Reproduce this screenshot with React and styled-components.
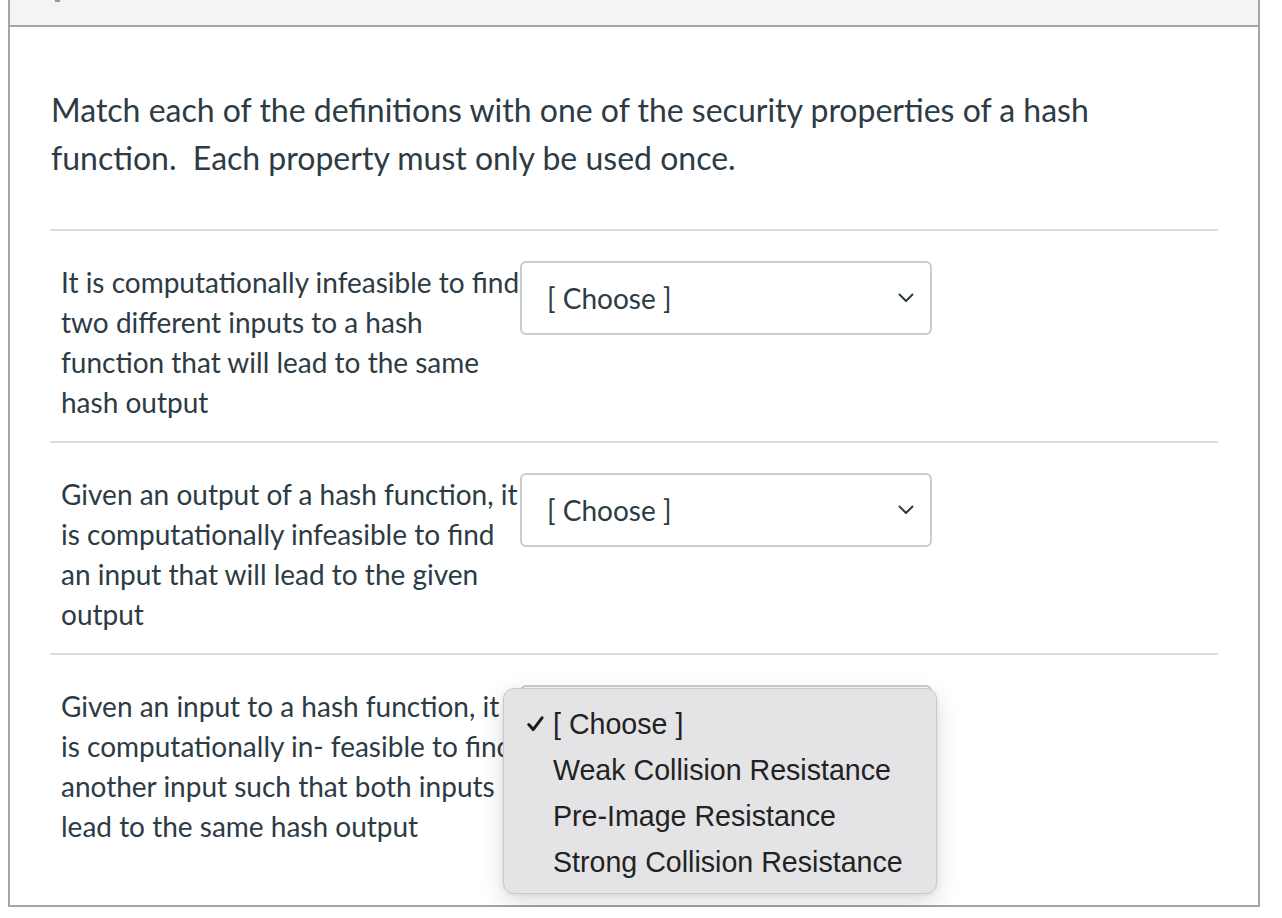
import React from "react";
import styled, { createGlobalStyle } from "styled-components";

const Global = createGlobalStyle`
  html, body { margin: 0; padding: 0; background: #ffffff; }
  body { font-family: Lato, "Open Sans", sans-serif; color: #2d3b45; }
  * { box-sizing: border-box; }
`;

const Card = styled.div`
  margin-left: 8px;
  width: 1252px;
  border: 2px solid #a5a5a5;
  border-top: none;
  background: #fff;
`;

const Header = styled.div`
  height: 27px;
  background: #f4f4f4;
  border-bottom: 2px solid #a5a5a5;
  position: relative;
  overflow: hidden;
`;

const HeaderMark = styled.span`
  position: absolute;
  left: 45px;
  top: 0;
  width: 5px;
  height: 2px;
  background: #9a9a9a;
`;

const Body = styled.div`
  padding: 59px 40px 40px 40px;
`;

const Question = styled.p`
  margin: 0 0 47px 1px;
  font-size: 32px;
  line-height: 48px;
  color: #2d3b45;
`;

const Row = styled.div`
  display: flex;
  align-items: flex-start;
  border-top: 2px solid #dddddd;
  padding: 31px 0 19px 11px;
`;

const Label = styled.div`
  width: 459px;
  flex: none;
  font-size: 28px;
  line-height: 40px;
  color: #2d3b45;
`;

const SelectWrap = styled.div`
  position: relative;
  margin-top: -1px;
`;

const Select = styled.div`
  width: 412px;
  height: 74px;
  border: 2px solid #c7cdd1;
  border-radius: 6px;
  background: #fff;
  display: flex;
  align-items: center;
  justify-content: space-between;
  padding: 0 16px 0 25px;
  font-size: 28px;
  color: #2d3b45;
  & > * {
    visibility: ${(p) => (p.$covered ? "hidden" : "visible")};
  }
`;

const Chevron = () => (
  <svg width="16" height="10" viewBox="0 0 16 10" fill="none">
    <path d="M1.5 1.5 L8 8 L14.5 1.5" stroke="#2d3b45" strokeWidth="2" strokeLinecap="round" strokeLinejoin="round" />
  </svg>
);

const Menu = styled.div`
  position: absolute;
  left: -17px;
  top: 3px;
  width: 434px;
  height: 206px;
  background: #e4e4e6;
  border: 1px solid #c9c9cb;
  border-radius: 11px;
  box-shadow: 0 8px 24px rgba(0, 0, 0, 0.14), 0 1px 4px rgba(0, 0, 0, 0.08);
  padding-top: 12px;
  font-family: "Liberation Sans", Arial, sans-serif;
  font-size: 28.6px;
  color: #222;
  z-index: 2;
`;

const MenuItem = styled.div`
  display: flex;
  align-items: center;
  height: 46px;
  padding-left: 23px;
`;

const CheckSlot = styled.span`
  width: 26px;
  flex: none;
  display: flex;
  align-items: center;
`;

const CheckIcon = () => (
  <svg width="17" height="16" viewBox="0 0 17 16" fill="none">
    <path d="M1.8 8.6 L6.2 13.6 L15 1.8" stroke="#1a1a1a" strokeWidth="3" strokeLinecap="round" strokeLinejoin="round" />
  </svg>
);

const rows = [
  {
    text: "It is computationally infeasible to find two different inputs to a hash function that will lead to the same hash output",
  },
  {
    text: "Given an output of a hash function, it is computationally infeasible to find an input that will lead to the given output",
  },
  {
    text: "Given an input to a hash function, it is computationally in- feasible to find another input such that both inputs lead to the same hash output",
    open: true,
  },
];

const options = [
  "[ Choose ]",
  "Weak Collision Resistance",
  "Pre-Image Resistance",
  "Strong Collision Resistance",
];

export default function App() {
  return (
    <>
      <Global />
      <Card>
        <Header>
          <HeaderMark />
        </Header>
        <Body>
          <Question>
            Match each of the definitions with one of the security properties of a hash function.&nbsp; Each property must only be used once.
          </Question>
          {rows.map((r, i) => (
            <Row key={i}>
              <Label>{r.text}</Label>
              <SelectWrap>
                <Select $covered={!!r.open}>
                  <span>[ Choose ]</span>
                  <Chevron />
                </Select>
                {r.open && (
                  <Menu>
                    {options.map((o, j) => (
                      <MenuItem key={o}>
                        <CheckSlot>{j === 0 && <CheckIcon />}</CheckSlot>
                        {o}
                      </MenuItem>
                    ))}
                  </Menu>
                )}
              </SelectWrap>
            </Row>
          ))}
        </Body>
      </Card>
    </>
  );
}
